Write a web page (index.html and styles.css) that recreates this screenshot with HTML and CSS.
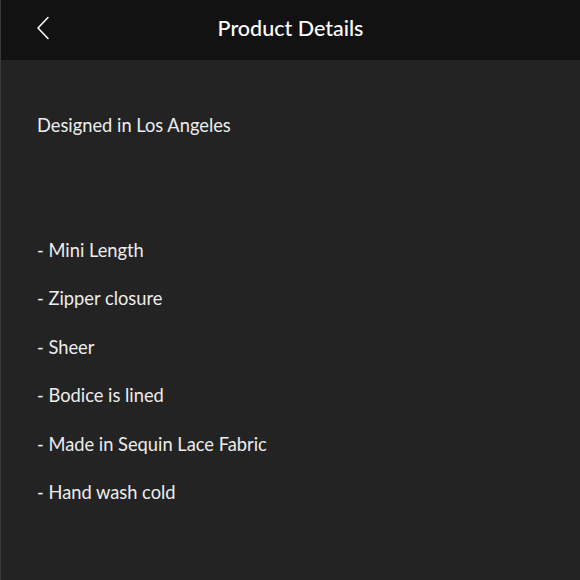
FILE: index.html
```html
<!DOCTYPE html>
<html>
<head>
<meta charset="utf-8">
<link rel="stylesheet" href="styles.css">
</head>
<body>
<div class="screen">
  <header class="topbar">
    <button class="back" aria-label="Back">
      <svg width="14" height="24" viewBox="0 0 14 24"><path d="M12 1.5 L2 12 L12 22.5" fill="none" stroke="#ffffff" stroke-width="1.5" stroke-linecap="round" stroke-linejoin="round"/></svg>
    </button>
    <h1 class="title">Product Details</h1>
  </header>
  <main class="content">
    <p class="line intro">Designed in Los Angeles</p>
    <ul class="features">
      <li class="line">- Mini Length</li>
      <li class="line">- Zipper closure</li>
      <li class="line">- Sheer</li>
      <li class="line">- Bodice is lined</li>
      <li class="line">- Made in Sequin Lace Fabric</li>
      <li class="line">- Hand wash cold</li>
    </ul>
  </main>
</div>
</body>
</html>
```

FILE: styles.css
```css
* { box-sizing: border-box; }
html, body {
  margin: 0;
  padding: 0;
  background: #232323;
  width: 580px;
  height: 580px;
  overflow: hidden;
}
.screen {
  width: 580px;
  height: 580px;
  background: #232323;
  font-family: Lato, "Noto Sans", sans-serif;
  color: #ededed;
  border-left: 1px solid #3a3a3a;
}
.topbar {
  height: 60px;
  padding-bottom: 5px;
  background: #121212;
  display: flex;
  align-items: center;
  justify-content: center;
  position: relative;
}
.back {
  position: absolute;
  left: 35px;
  top: 16px;
  background: none;
  border: 0;
  padding: 0;
  width: 14px;
  height: 24px;
  display: flex;
}
.title {
  margin: 0;
  font-size: 21.5px;
  font-weight: 500;
  color: #ffffff;
}
.content {
  padding: 41px 0 0 36px;
}
.line {
  margin: 0;
  height: 48.5px;
  line-height: 48.5px;
  font-size: 18.3px;
  font-weight: 400;
}
.intro {
  margin-bottom: 76px;
}
.features {
  list-style: none;
  margin: 0;
  padding: 0;
}
```
